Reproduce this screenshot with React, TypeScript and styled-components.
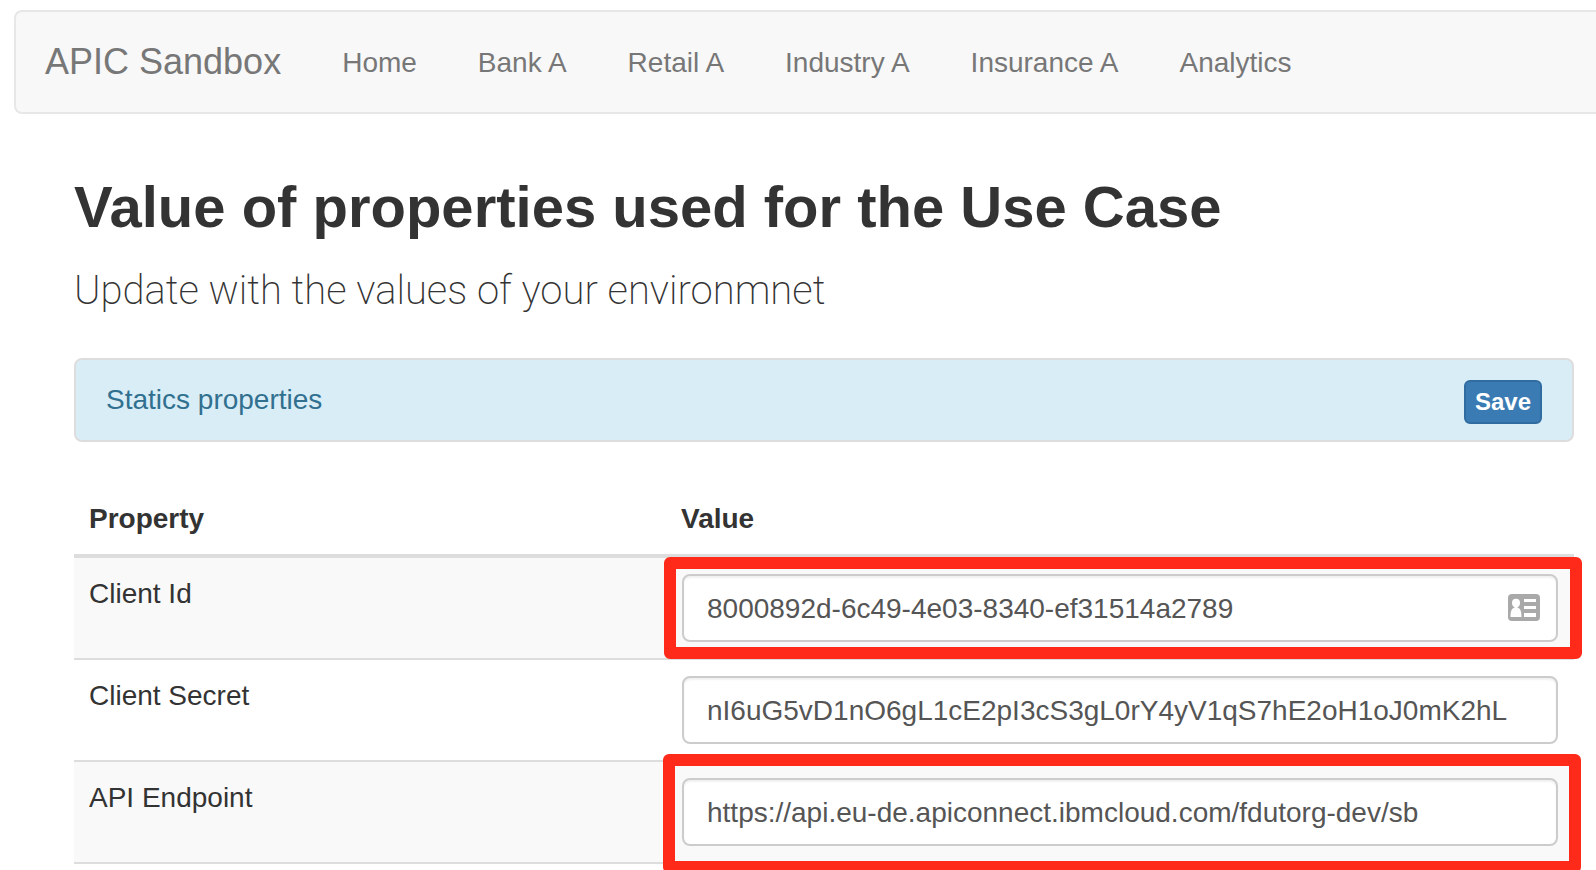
import React from "react";
import styled, { createGlobalStyle } from "styled-components";

const GlobalStyle = createGlobalStyle`
  *, *::before, *::after { box-sizing: border-box; }
  body {
    margin: 0;
    background: #fff;
    color: #333;
    font-family: "Helvetica Neue", "Liberation Sans", Arial, sans-serif;
    font-size: 28px;
    line-height: 40px;
  }
`;

const Page = styled.div`
  min-height: 100vh;
  padding: 10px 0 0 14px;
  overflow: hidden;
`;

const Navbar = styled.nav`
  display: flex;
  align-items: center;
  padding-left: 29px;
  background: #f8f8f8;
  border: 2px solid #e7e7e7;
  border-right: 0;
  border-radius: 8px 0 0 8px;
`;

const Brand = styled.a`
  padding: 30px 31px 30px 0;
  font-size: 36px;
  color: #777;
  text-decoration: none;
  white-space: nowrap;
`;

const NavList = styled.ul`
  display: flex;
  gap: 1px;
  margin: 0;
  padding: 0;
  list-style: none;
`;

const NavLink = styled.a`
  display: block;
  padding: 31px 30px 29px;
  color: #777;
  text-decoration: none;
  white-space: nowrap;
`;

const Content = styled.main`
  padding: 60px 22px 0 60px;
`;

const Title = styled.h2`
  margin: 0 0 20px;
  font-size: 58px;
  font-weight: 700;
  line-height: 66px;
`;

const Lead = styled.p`
  margin: 0 0 36px;
  font-family: Roboto, "Liberation Sans", sans-serif;
  font-size: 40px;
  font-weight: 200;
  line-height: 62px;
`;

const Panel = styled.section`
  display: flex;
  justify-content: space-between;
  align-items: flex-start;
  height: 84px;
  margin-bottom: 40px;
  padding: 20px 30px;
  background: #d9edf7;
  border: 2px solid #ddd;
  border-radius: 8px;
`;

const PanelTitle = styled.h3`
  margin: 0;
  font-size: 28px;
  font-weight: 400;
  color: #31708f;
`;

const SaveButton = styled.button`
  padding: 2px 9px;
  font-family: inherit;
  font-size: 24px;
  font-weight: 700;
  line-height: 36px;
  color: #fff;
  background: #3a7bb3;
  border: 2px solid #316ca1;
  border-radius: 6px;
`;

const Table = styled.table`
  width: 100%;
  table-layout: fixed;
  border-collapse: separate;
  border-spacing: 0;
`;

const HeadCell = styled.th`
  padding: 17px 15px 15px;
  text-align: left;
  border-bottom: 4px solid #ddd;

  &:first-child { width: 592px; }
`;

const Row = styled.tr`
  &:nth-child(odd) { background: #f9f9f9; }
`;

const LabelCell = styled.td`
  padding: 16px 15px;
  vertical-align: top;
  border-bottom: 2px solid #ddd;
`;

const ValueCell = styled.td`
  padding: 16px;
  border-bottom: 2px solid #ddd;
`;

const Field = styled.div`
  position: relative;
`;

const TextInput = styled.input`
  display: block;
  width: 100%;
  height: 68px;
  padding: 13px 23px 11px;
  font-family: inherit;
  font-size: 28px;
  line-height: 40px;
  color: #555;
  background: #fff;
  border: 2px solid #ccc;
  border-radius: 8px;
  box-shadow: inset 0 2px 2px rgba(0, 0, 0, 0.06);
  outline: none;
`;

const Highlight = styled.div<{ $inset: string }>`
  position: absolute;
  inset: ${(p) => p.$inset};
  border: 12px solid #ff2a1a;
  border-radius: 6px;
  pointer-events: none;
`;

const CardIcon = styled.svg`
  position: absolute;
  top: 20px;
  right: 18px;
`;

function ContactCard() {
  return (
    <CardIcon width="32" height="27" viewBox="0 0 32 27" aria-hidden="true">
      <rect width="32" height="27" rx="4" fill="#a9a9a9" />
      <ellipse cx="8" cy="9" rx="4" ry="4.200" fill="#fff" />
      <path fill="#fff" d="M6.500 12h3v1.500c2.700.8 4 3.500 4 9.500h-11c0-6 1.300-8.700 4-9.500z" />
      <path fill="#fff" d="M16 5h12v3H16zM16 12h12v3H16zM16 19h12v4H16z" />
    </CardIcon>
  );
}

const navItems = ["Home", "Bank A", "Retail A", "Industry A", "Insurance A", "Analytics"];

const properties = [
  {
    id: "client-id",
    label: "Client Id",
    value: "8000892d-6c49-4e03-8340-ef31514a2789",
    highlight: "-17px -24px -17px -18px",
    card: true,
  },
  {
    id: "client-secret",
    label: "Client Secret",
    value: "nI6uG5vD1nO6gL1cE2pI3cS3gL0rY4yV1qS7hE2oH1oJ0mK2hL",
  },
  {
    id: "api-endpoint",
    label: "API Endpoint",
    value: "https://api.eu-de.apiconnect.ibmcloud.com/fdutorg-dev/sb",
    highlight: "-24px -23px -27px -19px",
  },
];

export default function App() {
  return (
    <>
      <GlobalStyle />
      <Page>
        <Navbar>
          <Brand href="#">APIC Sandbox</Brand>
          <NavList>
            {navItems.map((item) => (
              <li key={item}>
                <NavLink href="#">{item}</NavLink>
              </li>
            ))}
          </NavList>
        </Navbar>
        <Content>
          <Title>Value of properties used for the Use Case</Title>
          <Lead>Update with the values of your environmnet</Lead>
          <Panel>
            <PanelTitle>Statics properties</PanelTitle>
            <SaveButton type="button">Save</SaveButton>
          </Panel>
          <Table>
            <thead>
              <tr>
                <HeadCell scope="col">Property</HeadCell>
                <HeadCell scope="col">Value</HeadCell>
              </tr>
            </thead>
            <tbody>
              {properties.map((p) => (
                <Row key={p.id}>
                  <LabelCell>
                    <label htmlFor={p.id}>{p.label}</label>
                  </LabelCell>
                  <ValueCell>
                    <Field>
                      <TextInput id={p.id} type="text" defaultValue={p.value} />
                      {p.card && <ContactCard />}
                      {p.highlight && <Highlight $inset={p.highlight} />}
                    </Field>
                  </ValueCell>
                </Row>
              ))}
            </tbody>
          </Table>
        </Content>
      </Page>
    </>
  );
}
